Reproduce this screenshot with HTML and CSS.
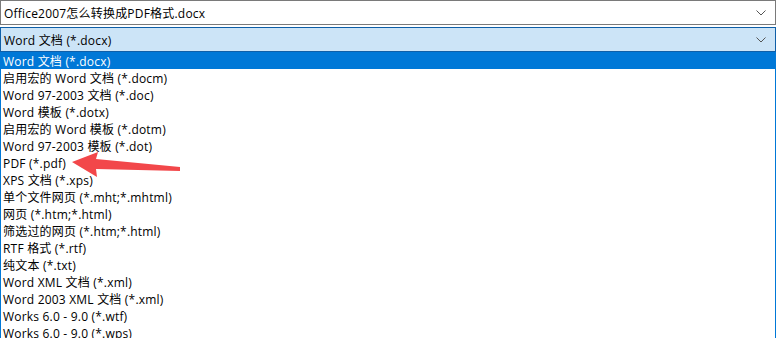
FILE: index.html
```html
<!DOCTYPE html>
<html lang="zh-CN">
<head>
  <meta charset="UTF-8">
  <title>另存为类型</title>
  <link rel="stylesheet" href="styles.css">
</head>
<body>
  <div class="save-panel">
    <div class="combo file-name">
      <span>Office2007怎么转换成PDF格式.docx</span>
      <svg class="chevron" width="10" height="6" viewBox="0 0 10 6"><path d="M0.5 0.5 L5 5 L9.5 0.5" fill="none" stroke="#555" stroke-width="1"/></svg>
    </div>

    <div class="combo type-select">
      <span>Word 文档 (*.docx)</span>
      <svg class="chevron" width="10" height="6" viewBox="0 0 10 6"><path d="M0.5 0.5 L5 5 L9.5 0.5" fill="none" stroke="#555" stroke-width="1"/></svg>
    </div>

    <ul class="type-list">
      <li class="selected">Word 文档 (*.docx)</li>
      <li>启用宏的 Word 文档 (*.docm)</li>
      <li>Word 97-2003 文档 (*.doc)</li>
      <li>Word 模板 (*.dotx)</li>
      <li>启用宏的 Word 模板 (*.dotm)</li>
      <li>Word 97-2003 模板 (*.dot)</li>
      <li>PDF (*.pdf)</li>
      <li>XPS 文档 (*.xps)</li>
      <li>单个文件网页 (*.mht;*.mhtml)</li>
      <li>网页 (*.htm;*.html)</li>
      <li>筛选过的网页 (*.htm;*.html)</li>
      <li>RTF 格式 (*.rtf)</li>
      <li>纯文本 (*.txt)</li>
      <li>Word XML 文档 (*.xml)</li>
      <li>Word 2003 XML 文档 (*.xml)</li>
      <li>Works 6.0 - 9.0 (*.wtf)</li>
      <li>Works 6.0 - 9.0 (*.wps)</li>
    </ul>

    <!-- red pointer drawn over the list -->
    <svg class="pointer" width="776" height="338" viewBox="0 0 776 338">
      <polygon points="72,162 98,152 96,159 180,167 180,171 96,169 97,177" fill="#f2474a"/>
    </svg>
  </div>
</body>
</html>
```

FILE: styles.css
```css
body {
  margin: 0;
  background: #fff;
  font-family: "Open Sans", "Noto Sans CJK SC", sans-serif;
  font-size: 12px;
  letter-spacing: 0.2px;
  color: #000;
  overflow: hidden;
}

.save-panel {
  position: relative;
  width: 776px;
  height: 338px;
  overflow: hidden;
}

.combo {
  box-sizing: border-box;
  height: 25px;
  display: flex;
  align-items: center;
  justify-content: space-between;
  padding: 1px 9px 0 3px;
}

.file-name {
  border: 1px solid #7a7a7a;
  margin-bottom: 2px;
}

.type-select {
  background: #cce4f7;
  border: 1px solid #0f5fa8;
}

.chevron {
  display: block;
}

.type-list {
  list-style: none;
  margin: 0;
  padding: 0;
  border-left: 1px solid #0078d7;
  border-right: 1px solid #0078d7;
}

.type-list li {
  box-sizing: border-box;
  height: 17px;
  line-height: 17px;
  padding: 1px 0 0 2px;
  white-space: nowrap;
}

.type-list .selected {
  background: #0078d7;
  color: #fff;
}

.pointer {
  position: absolute;
  left: 0;
  top: 0;
  pointer-events: none;
}
```
